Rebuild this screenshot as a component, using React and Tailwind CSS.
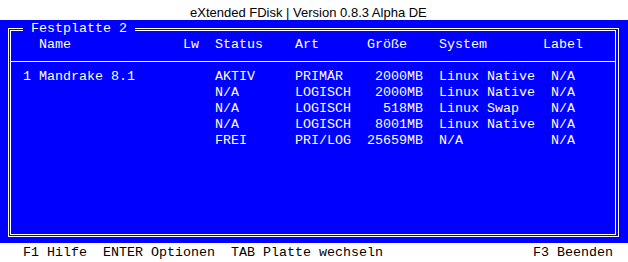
import React from 'react';

const partitions = [
  { nr: '1', name: 'Mandrake 8.1', lw: '', status: 'AKTIV', art: 'PRIMÄR', size: '2000MB', system: 'Linux Native', label: 'N/A' },
  { nr: '', name: '', lw: '', status: 'N/A', art: 'LOGISCH', size: '2000MB', system: 'Linux Native', label: 'N/A' },
  { nr: '', name: '', lw: '', status: 'N/A', art: 'LOGISCH', size: '518MB', system: 'Linux Swap', label: 'N/A' },
  { nr: '', name: '', lw: '', status: 'N/A', art: 'LOGISCH', size: '8001MB', system: 'Linux Native', label: 'N/A' },
  { nr: '', name: '', lw: '', status: 'FREI', art: 'PRI/LOG', size: '25659MB', system: 'N/A', label: 'N/A' },
];

const App = () => {
  return (
    <div className="w-[628px] h-[262px] bg-white flex flex-col overflow-hidden font-['Liberation_Mono',monospace] text-[13.333px] leading-[16px]">
      {/* TITLE BAR */}
      <div className="h-[20px] shrink-0 pl-[190px] pt-[6px] font-['Liberation_Sans',Arial,sans-serif] text-[13px] leading-[14px] text-black">
        eXtended FDisk | Version 0.8.3 Alpha DE
      </div>

      {/* BLUE SCREEN */}
      <div className="h-[223px] shrink-0 bg-[#0000ff] pt-[8px] pl-[8px] pr-[9px] pb-[6px] text-white">
        <div className="relative h-full border border-white p-[1px] pr-[2px]">
          <span className="absolute left-[14px] top-[-8px] bg-[#0000ff] px-[8px] whitespace-pre">Festplatte 2</span>
          <div className="h-full border border-white pt-[6px]">
            {/* HEADER */}
            <div className="flex pl-[12px] whitespace-pre">
              <div className="w-[160px] pl-[16px]">Name</div>
              <div className="w-[32px]">Lw</div>
              <div className="w-[80px]">Status</div>
              <div className="w-[72px]">Art</div>
              <div className="w-[56px]">Größe</div>
              <div className="w-[120px] pl-[16px]">System</div>
              <div>Label</div>
            </div>
            <div className="mt-[8px] h-px bg-white"></div>

            {/* ROWS */}
            <div className="mt-[7px] flex flex-col">
              {partitions.map((p, i) => (
                <div key={i} className="flex h-[16px] pl-[12px] whitespace-pre">
                  <div className="w-[160px]">{p.nr ? `${p.nr} ${p.name}` : ''}</div>
                  <div className="w-[32px]">{p.lw}</div>
                  <div className="w-[80px]">{p.status}</div>
                  <div className="w-[72px]">{p.art}</div>
                  <div className="w-[56px] text-right">{p.size}</div>
                  <div className="w-[120px] pl-[16px]">{p.system}</div>
                  <div className="pl-[8px]">{p.label}</div>
                </div>
              ))}
            </div>
          </div>
        </div>
      </div>

      {/* FOOTER */}
      <div className="flex-1 flex items-center justify-between pl-[23px] pr-[15px] text-black whitespace-pre">
        <span>F1 Hilfe  ENTER Optionen  TAB Platte wechseln</span>
        <span>F3 Beenden</span>
      </div>
    </div>
  );
};

export default App;
